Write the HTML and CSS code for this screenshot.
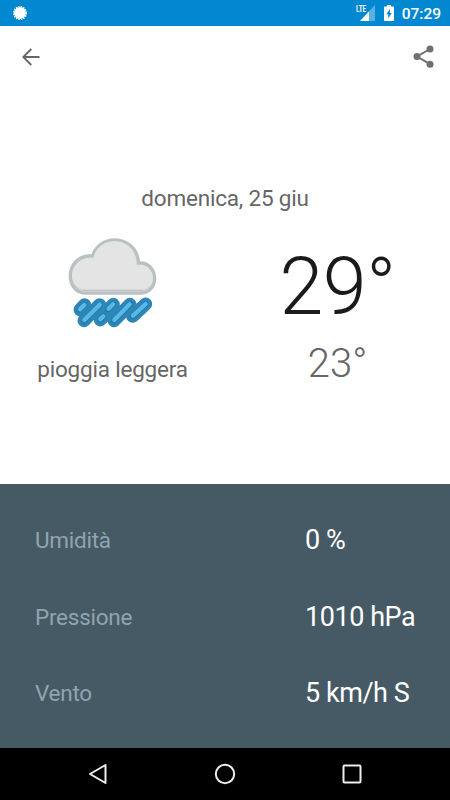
FILE: index.html
```html
<!DOCTYPE html>
<html lang="it">
<head>
  <meta charset="UTF-8" />
  <meta name="viewport" content="width=device-width, initial-scale=1" />
  <title>Meteo</title>
  <link rel="stylesheet" href="styles.css">
</head>
<body>
  <!-- Status bar -->
  <div class="status-bar">
    <svg class="sun" width="16" height="16" viewBox="0 0 16 16">
      <circle cx="8" cy="8" r="6" fill="#fff" />
      <circle cx="8" cy="8" r="6.3" fill="none" stroke="#fff" stroke-width="1.6" stroke-dasharray="1.3 1.174" />
    </svg>
    <div class="signal">
      <svg width="20" height="18" viewBox="0 0 20 18">
        <path d="M20 1v16H5z" fill="#fff" opacity=".35" />
        <path d="M14 7.500v9.500H5z" fill="#fff" />
      </svg>
      <span class="lte">LTE</span>
    </div>
    <svg class="battery" width="10" height="16" viewBox="0 0 10 16">
      <path d="M3 0h4v1.6h2q1 0 1 1V15q0 1-1 1H1q-1 0-1-1V2.600q0-1 1-1h2z" fill="#fff" />
      <path d="M6 4L2.300 9.300h2V13.500L7.700 8H5.900z" fill="#0288d1" />
    </svg>
    <span class="clock">07:29</span>
  </div>

  <!-- Today -->
  <div class="today">
    <div class="toolbar">
      <svg width="18" height="18" viewBox="0 0 18 18">
        <path d="M17.500 9H1.500M9.300 1L1.300 9l8 8" fill="none" stroke="#666" stroke-width="1.8" />
      </svg>
      <svg width="22" height="24" viewBox="0 0 22 24">
        <path d="M17 4L4 11.500l13 7.700" fill="none" stroke="#707070" stroke-width="2" />
        <g fill="#707070">
          <circle cx="17" cy="4" r="3.500" />
          <circle cx="4" cy="11.500" r="3.500" />
          <circle cx="17" cy="19.200" r="3.500" />
        </g>
      </svg>
    </div>

    <div class="date">domenica, 25 giu</div>

    <div class="forecast">
      <div class="condition">
        <svg width="105" height="105" viewBox="0 0 315 315">
          <path d="M75 194C46 194 26 170 26 138C26 99 58 69 94 73C105 44 132 25 163 25C203 25 237 52 240 94C268 93 289 116 289 146C289 174 268 194 241 194Z" fill="#b9c1c5" />
          <path d="M75 185C52 183 36 161 36 137C36 104 66 77 100 84C108 52 133 34 163 34C202 34 231 63 230 105C258 100 279 120 279 146C279 169 262 184 241 185Z" fill="#d4d6d7" />
          <path d="M75 179C52 177 36 158 36 137C36 104 66 77 100 84C108 52 133 34 163 34C202 34 231 63 230 105C258 100 279 120 279 146C279 165 262 178 241 179Z" fill="#e4e4e4" />
          <path d="M68 181H248" stroke="#aab2b6" stroke-width="2" />
          <g fill="none" stroke-linecap="round">
            <path d="M60 239L74 224M72 272L119 224M121 270L131 259M145 238L160 223M162 272L210 223M218 259L257 222" stroke="#2e86b8" stroke-width="39" />
            <path d="M60 239L74 224M72 272L119 224M121 270L131 259M145 238L160 223M162 272L210 223M218 259L257 222" stroke="#2278aa" stroke-width="17" />
            <path d="M60 238L73 225M73 270L119 224M121 268L130 259M146 236L159 223M163 270L209 223M219 257L257 222" stroke="#58b9e6" stroke-width="13" />
          </g>
        </svg>
        <div class="description">pioggia leggera</div>
      </div>
      <div class="temps">
        <div class="high">29°</div>
        <div class="low">23°</div>
      </div>
    </div>
  </div>

  <!-- Details -->
  <div class="details">
    <div class="row">
      <span class="label">Umidità</span>
      <span class="value">0 %</span>
    </div>
    <div class="row">
      <span class="label">Pressione</span>
      <span class="value">1010 hPa</span>
    </div>
    <div class="row">
      <span class="label">Vento</span>
      <span class="value">5 km/h S</span>
    </div>
  </div>

  <!-- Navigation bar -->
  <div class="nav-bar">
    <svg width="22" height="22" viewBox="0 0 22 22"><path d="M18.500 2v18L3 11z" /></svg>
    <svg width="22" height="22" viewBox="0 0 22 22"><circle cx="11" cy="11" r="9.200" /></svg>
    <svg width="22" height="22" viewBox="0 0 22 22"><rect x="2.500" y="2.500" width="17" height="17" rx="1" /></svg>
  </div>
</body>
</html>
```
FILE: styles.css
```css
* {
  box-sizing: border-box;
}
body {
  margin: 0;
  height: 800px;
  display: flex;
  flex-direction: column;
  background: #fff;
  font-family: Roboto, sans-serif;
  overflow: hidden;
}
svg {
  display: block;
  flex: none;
}
.status-bar {
  height: 26px;
  display: flex;
  align-items: center;
  padding: 0 9px 0 12px;
  background: #0288d1;
  color: #fff;
}
.signal {
  position: relative;
  margin-left: auto;
}
.lte {
  position: absolute;
  top: 1px;
  left: 1px;
  font-size: 9px;
  line-height: 9px;
  font-weight: 700;
  transform: scaleX(0.7);
  transform-origin: left;
}
.battery {
  margin-left: 9px;
}
.clock {
  margin-left: 8px;
  font-size: 15.500px;
  line-height: 26px;
  font-weight: 500;
  padding-top: 2px;
}
.today {
  height: 458px;
}
.toolbar {
  height: 61px;
  display: flex;
  align-items: center;
  justify-content: space-between;
  padding: 0 15px 0 22px;
}
.date {
  margin-top: 98px;
  text-align: center;
  font-size: 22.500px;
  line-height: 27px;
  letter-spacing: -0.2px;
  color: #666;
}
.forecast {
  display: grid;
  grid-template-columns: 1fr 1fr;
  margin-top: 18px;
}
.condition,
.temps {
  display: flex;
  flex-direction: column;
  align-items: center;
}
.description {
  margin-top: 20px;
  font-size: 22.500px;
  line-height: 28px;
  letter-spacing: -0.2px;
  color: #666;
}
.high {
  margin-top: 10px;
  font-size: 79px;
  line-height: 94px;
  letter-spacing: -0.5px;
  font-weight: 300;
  color: #1a1a1a;
}
.low {
  margin-top: 6px;
  font-size: 40px;
  line-height: 48px;
  font-weight: 300;
  color: #666;
}
.details {
  flex: 1;
  padding: 18px 20px 16px 35px;
  background: #455a64;
}
.row {
  height: 76.500px;
  display: grid;
  grid-template-columns: 270px 1fr;
  align-items: center;
}
.label {
  font-size: 22.500px;
  letter-spacing: -0.25px;
  color: #90a4ae;
}
.value {
  font-size: 27px;
  letter-spacing: -0.45px;
  color: #fff;
  white-space: nowrap;
}
.nav-bar {
  height: 52px;
  display: flex;
  align-items: center;
  justify-content: space-between;
  padding: 0 87px;
  background: #000;
}
.nav-bar svg {
  fill: none;
  stroke: #eee;
  stroke-width: 2;
  stroke-linejoin: round;
}
```
